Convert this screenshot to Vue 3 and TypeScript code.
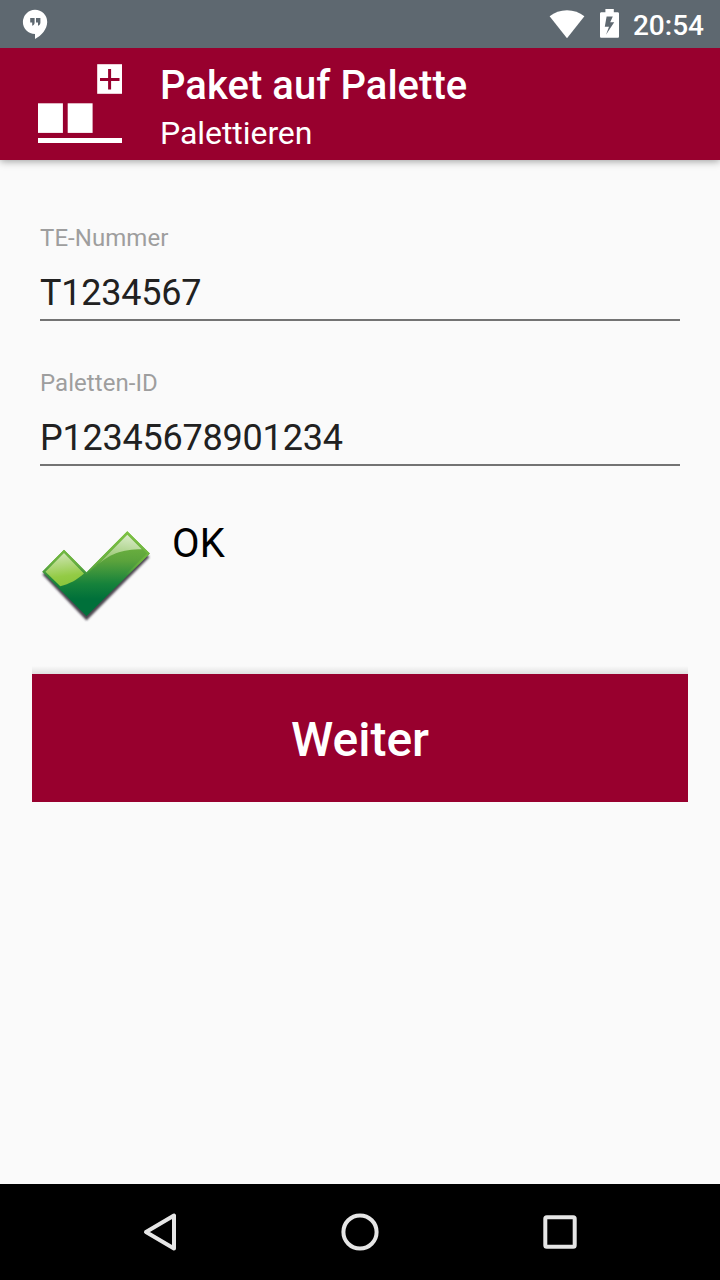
<script setup lang="ts">
import { ref } from 'vue'

interface Field {
  id: string
  label: string
  value: string
}

const clock = '20:54'
const fields = ref<Field[]>([
  { id: 'te', label: 'TE-Nummer', value: 'T1234567' },
  { id: 'pal', label: 'Paletten-ID', value: 'P12345678901234' },
])
</script>

<template>
  <div class="screen">
    <div class="status">
      <svg class="hangouts" width="26" height="32" viewBox="0 0 26 32">
        <path d="M13 1.8A12.2 12.2 0 0 0 .9 14c0 6.700 5.400 12 12.100 12v4.900C19.500 27.800 25.200 21 25.200 14A12.200 12.200 0 0 0 13 1.800z" fill="#fff" />
        <path d="M8.200 10h4.400v4.500c0 1.600-.7 2.700-2.400 3.300v-3.300h-2zM14 10h4.400v4.500c0 1.600-.7 2.700-2.400 3.300v-3.300h-2z" fill="#5e6870" />
      </svg>
      <div class="status-right">
        <svg class="wifi" width="36" height="29" viewBox="0 0 36 29">
          <path d="M.6 6.200C5.500 2.400 11.400.2 18 .2s12.500 2.200 17.400 6L18 28.200z" fill="#fff" />
        </svg>
        <svg class="battery" width="20" height="30" viewBox="0 0 20 30">
          <path fill-rule="evenodd" d="M5.400 0h8.400v3.200h3.700c1 0 1.500.5 1.500 1.500v22.600c0 1-.5 1.500-1.500 1.500h-16C.5 28.800 0 28.300 0 27.300V4.700c0-1 .5-1.500 1.500-1.500h3.900zM12.800 7.600H6.600L4.800 17.700h4.200L6 25.800 14.200 13.300H10.200z" fill="#fff" />
        </svg>
        <span class="clock">{{ clock }}</span>
      </div>
    </div>

    <header class="bar">
      <svg class="logo" width="84" height="80" viewBox="0 0 84 80">
        <g fill="#fff">
          <rect x="59.200" y="0.200" width="24.800" height="29.600" />
          <rect x="0" y="39.300" width="24.900" height="29.600" />
          <rect x="29.700" y="39.300" width="24.900" height="29.600" />
          <rect x="0" y="74" width="84" height="5" />
        </g>
        <path d="M62 15.500h19.500M71.600 5v20.500" stroke="#98002e" stroke-width="3" />
      </svg>
      <div class="titles">
        <h1>Paket auf Palette</h1>
        <p>Palettieren</p>
      </div>
    </header>

    <main class="content">
      <div v-for="f in fields" :key="f.id" class="field">
        <label :for="f.id">{{ f.label }}</label>
        <input :id="f.id" v-model="f.value" type="text" spellcheck="false" />
      </div>

      <div class="result">
        <svg class="check" width="112" height="96" viewBox="0 0 112 96">
          <defs>
            <linearGradient id="body" x1="0" y1="0" x2="0" y2="1">
              <stop offset="0" stop-color="#7cbd42" />
              <stop offset="0.350" stop-color="#5ba33c" />
              <stop offset="0.620" stop-color="#16823b" />
              <stop offset="0.800" stop-color="#00703a" />
              <stop offset="1" stop-color="#00703a" />
            </linearGradient>
            <linearGradient id="edge" x1="0" y1="0" x2="0" y2="1">
              <stop offset="0" stop-color="#7cc142" />
              <stop offset="0.350" stop-color="#6ab23e" />
              <stop offset="0.520" stop-color="#6ab23e" stop-opacity="0" />
            </linearGradient>
            <linearGradient id="glossLeft" x1="0.350" y1="0" x2="0.500" y2="1">
              <stop offset="0" stop-color="#cfe5b4" />
              <stop offset="0.700" stop-color="#93cb45" />
              <stop offset="1" stop-color="#89c53b" />
            </linearGradient>
            <linearGradient id="glossRight" x1="0.600" y1="0" x2="0.400" y2="1">
              <stop offset="0" stop-color="#d8ebc6" />
              <stop offset="1" stop-color="#83bb54" />
            </linearGradient>
            <filter id="soft" x="-10%" y="-10%" width="120%" height="125%">
              <feGaussianBlur stdDeviation="1.200" />
            </filter>
          </defs>
          <path d="M2.500 44.500L24 25l22.500 22L87 8l22.500 19L46.500 90.500z" fill="#37323d" opacity="0.900" filter="url(#soft)" />
          <path d="M2.200 41.700L24 19.800l22.500 22.500L87.300 1.200 109.800 23.400 46.500 86.200z" fill="url(#body)" />
          <path d="M3.600 41.700L24 21.200l22.500 22.500L87.300 2.600l21.100 20.800L46.500 84.800z" fill="none" stroke="url(#edge)" stroke-width="2" />
          <path d="M5.400 41.700L24 23l20 20.600C37 50 29.500 54 20.300 56.300z" fill="url(#glossLeft)" />
          <path d="M53.500 38.900L87.300 4.700l14.500 14.500C82 19.500 69 23 53.500 38.900z" fill="url(#glossRight)" />
        </svg>
        <span class="message">OK</span>
      </div>

      <div class="action">
        <button type="button">Weiter</button>
      </div>
    </main>

    <nav class="nav">
      <svg width="40" height="40" viewBox="0 0 40 40">
        <path d="M34 3.500v33L6 20z" fill="none" stroke="#e6e6e6" stroke-width="4" stroke-linejoin="round" />
      </svg>
      <svg width="40" height="40" viewBox="0 0 40 40">
        <circle cx="20" cy="20" r="16.600" fill="none" stroke="#e6e6e6" stroke-width="4" />
      </svg>
      <svg width="40" height="40" viewBox="0 0 40 40">
        <rect x="5.300" y="5.300" width="29.400" height="29.400" rx="1.500" fill="none" stroke="#e6e6e6" stroke-width="4" />
      </svg>
    </nav>
  </div>
</template>

<style>
body {
  margin: 0;
  background: #fafafa;
}
</style>

<style scoped>
.screen {
  width: 720px;
  height: 1280px;
  display: flex;
  flex-direction: column;
  background: #fafafa;
  font-family: Roboto, "Liberation Sans", sans-serif;
  overflow: hidden;
}
svg {
  display: block;
  flex: none;
}
.status {
  height: 48px;
  flex: none;
  box-sizing: border-box;
  padding: 0 16px 0 22px;
  display: flex;
  justify-content: space-between;
  background: #5e6870;
  color: #fff;
  z-index: 2;
}
.hangouts {
  margin-top: 8px;
}
.status-right {
  display: flex;
  align-items: flex-start;
}
.wifi {
  margin: 10px 15px 0 0;
}
.battery {
  margin: 9px 13px 0 0;
}
.clock {
  font-size: 28px;
  font-weight: 500;
  line-height: 51px;
}
.bar {
  height: 112px;
  flex: none;
  box-sizing: border-box;
  padding-left: 38px;
  display: flex;
  align-items: flex-start;
  gap: 38px;
  background: #98002e;
  color: #fff;
  box-shadow: 0 1px 8px rgba(0, 0, 0, 0.4);
  z-index: 1;
}
.logo {
  margin-top: 16px;
}
h1 {
  margin: 14px 0 0;
  font-size: 40px;
  font-weight: 500;
  line-height: 48px;
  letter-spacing: 0.05px;
}
.titles p {
  margin: 4px 0 0;
  font-size: 32px;
  line-height: 38px;
  letter-spacing: -0.06px;
}
.content {
  flex: 1;
  padding: 64px 32px 0;
}
.field {
  height: 97px;
  margin: 0 8px 48px;
  display: flex;
  flex-direction: column;
}
label {
  font-size: 24px;
  line-height: 28px;
  letter-spacing: 0.06px;
  color: #9e9e9e;
}
.status,
.bar {
  position: relative;
}
.status {
  flex-shrink: 0;
}
input {
  height: 53px;
  box-sizing: border-box;
  margin: 16px 0 0;
  padding: 0 0 1px;
  border: 0;
  border-bottom: 2px solid #737373;
  border-radius: 0;
  outline: 0;
  background: transparent;
  font: 36px/42px Roboto, "Liberation Sans", sans-serif;
  letter-spacing: -0.22px;
  color: #212121;
}
.result {
  display: flex;
  align-items: flex-start;
  height: 152px;
  padding-left: 8px;
  gap: 20px;
}
.check {
  margin-top: 16px;
}
.message {
  margin-top: 6px;
  font-size: 40px;
  line-height: 48px;
  letter-spacing: 0.2px;
  color: #000;
}
.action::before {
  content: "";
  display: block;
  height: 8px;
  background: linear-gradient(rgba(0, 0, 0, 0), rgba(0, 0, 0, 0.1));
}
button {
  display: block;
  width: 100%;
  height: 128px;
  padding: 3px 0 0;
  border: 0;
  background: #98002e;
  color: #fff;
  font: 500 48px/56px Roboto, "Liberation Sans", sans-serif;
}
.nav {
  height: 96px;
  flex: none;
  display: flex;
  justify-content: center;
  align-items: center;
  gap: 160px;
  background: #000;
}
</style>
